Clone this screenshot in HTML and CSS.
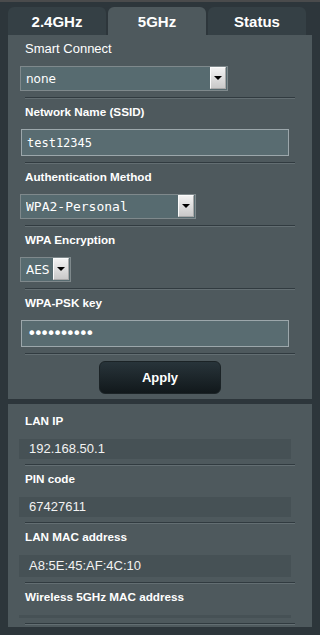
FILE: index.html
```html
<!DOCTYPE html>
<html lang="en">
<head>
<meta charset="utf-8">
<title>Wireless 5GHz</title>
<link rel="stylesheet" href="styles.css">
</head>
<body>
<div class="page">
  <div class="tabs">
    <div class="tab">2.4GHz</div>
    <div class="tab active">5GHz</div>
    <div class="tab">Status</div>
  </div>

  <div class="panel panel-main">
    <div class="row">
      <div class="label label-light">Smart Connect</div>
      <div class="select select-sc">
        <select><option>none</option></select>
        <span class="arrow"></span>
      </div>
    </div>
    <div class="sep"></div>

    <div class="row">
      <div class="label">Network Name (SSID)</div>
      <input class="field" type="text" value="test12345">
    </div>
    <div class="sep"></div>

    <div class="row">
      <div class="label">Authentication Method</div>
      <div class="select select-auth">
        <select class="mono"><option>WPA2-Personal</option></select>
        <span class="arrow"></span>
      </div>
    </div>
    <div class="sep"></div>

    <div class="row">
      <div class="label">WPA Encryption</div>
      <div class="select select-enc">
        <select><option>AES</option></select>
        <span class="arrow"></span>
      </div>
    </div>
    <div class="sep"></div>

    <div class="row">
      <div class="label">WPA-PSK key</div>
      <input class="field field-pass" type="password" value="abcdefghij">
    </div>
    <div class="sep"></div>

    <div class="actions">
      <button class="apply" type="button">Apply</button>
    </div>
  </div>

  <div class="panel panel-info">
    <div class="row">
      <div class="label">LAN IP</div>
      <div class="value">192.168.50.1</div>
    </div>
    <div class="sep"></div>
    <div class="row">
      <div class="label">PIN code</div>
      <div class="value">67427611</div>
    </div>
    <div class="sep"></div>
    <div class="row">
      <div class="label">LAN MAC address</div>
      <div class="value value-tall">A8:5E:45:AF:4C:10</div>
    </div>
    <div class="sep"></div>
    <div class="row">
      <div class="label">Wireless 5GHz MAC address</div>
      <div class="value value-empty"></div>
    </div>
    <div class="sep"></div>
  </div>
</div>
</body>
</html>
```

FILE: styles.css
```css
* { box-sizing: border-box; }

html, body {
  margin: 0;
  padding: 0;
  background: #2d363b;
}

body {
  border-top: 2px solid #4a4b4c;
  font-family: "Liberation Sans", Arial, sans-serif;
  color: #ffffff;
  min-height: 635px;
}

.page {
  padding: 5px 8px 0;
}

.tabs {
  display: flex;
  gap: 2px;
}

.tab {
  width: 98px;
  height: 28px;
  line-height: 29px;
  text-align: center;
  font-weight: bold;
  font-size: 15px;
  background: #354045;
  border-radius: 6px 6px 0 0;
}

.tab.active {
  background: #4e595d;
}

.panel {
  background: #4e595d;
}

.panel-main {
  padding: 1px 0 5px;
}

.panel-info {
  margin-top: 5px;
  padding: 4px 0 2px;
}

.row {
  padding: 5px 0 6px;
}

.panel-info .row {
  padding-bottom: 5px;
}

.label {
  margin: 0 17px;
  line-height: 16px;
  font-size: 11.7px;
  font-weight: bold;
}

.label-light {
  font-weight: normal;
  font-size: 13px;
}

.sep {
  margin: 0 17px;
  border-top: 1px solid #313b40;
  border-bottom: 1px solid #636e72;
}

.select {
  position: relative;
  margin: 9px 0 0 12px;
  height: 25px;
}

.select-sc { width: 208px; }
.select-auth { width: 176px; }
.select-enc { width: 51px; }

.select select {
  -webkit-appearance: none;
  appearance: none;
  display: block;
  width: 100%;
  height: 25px;
  margin: 0;
  padding: 0 0 0 5px;
  background: #576b70;
  border: 1px solid #7f898c;
  border-radius: 0;
  color: #ffffff;
  font-family: "DejaVu Sans", Verdana, sans-serif;
  font-size: 12px;
  outline: none;
}

.select select.mono {
  font-family: "DejaVu Sans Mono", "Lucida Console", monospace;
  font-size: 13px;
}

.arrow {
  position: absolute;
  right: 2px;
  top: 1px;
  width: 16px;
  height: 22px;
  background: linear-gradient(#f2f2f2, #c9c9c9);
  border: 1px solid #fbfbfb;
  border-right-color: #a8a8a8;
  border-bottom-color: #a8a8a8;
}

.arrow::after {
  content: "";
  position: absolute;
  left: 3px;
  top: 8px;
  border-left: 4px solid transparent;
  border-right: 4px solid transparent;
  border-top: 4px solid #000000;
}

.field {
  display: block;
  margin: 9px 0 0 13px;
  width: 268px;
  height: 27px;
  padding: 0 0 0 5px;
  background: #596c71;
  border: 1px solid #9ca7ab;
  border-radius: 0;
  color: #ffffff;
  font-family: "DejaVu Sans Mono", "Lucida Console", monospace;
  font-size: 12px;
  outline: none;
}

.field-pass {
  font-size: 16px;
  letter-spacing: -3.2px;
}

.actions {
  display: flex;
  justify-content: center;
  padding-top: 6px;
}

.apply {
  width: 122px;
  height: 33px;
  border: 1px solid #1b2326;
  border-radius: 6px;
  background: linear-gradient(#28343a, #11181b);
  color: #ffffff;
  font-family: "Liberation Sans", Arial, sans-serif;
  font-weight: bold;
  font-size: 13px;
  padding: 0;
}

.value {
  margin: 10px 21px 0 11px;
  padding: 1px 10px;
  line-height: 18px;
  background: #465155;
  font-size: 13px;
  color: #f2f2f2;
}

.value-tall {
  padding: 2px 10px;
}

.value-empty {
  height: 3px;
  padding: 0;
}
```
